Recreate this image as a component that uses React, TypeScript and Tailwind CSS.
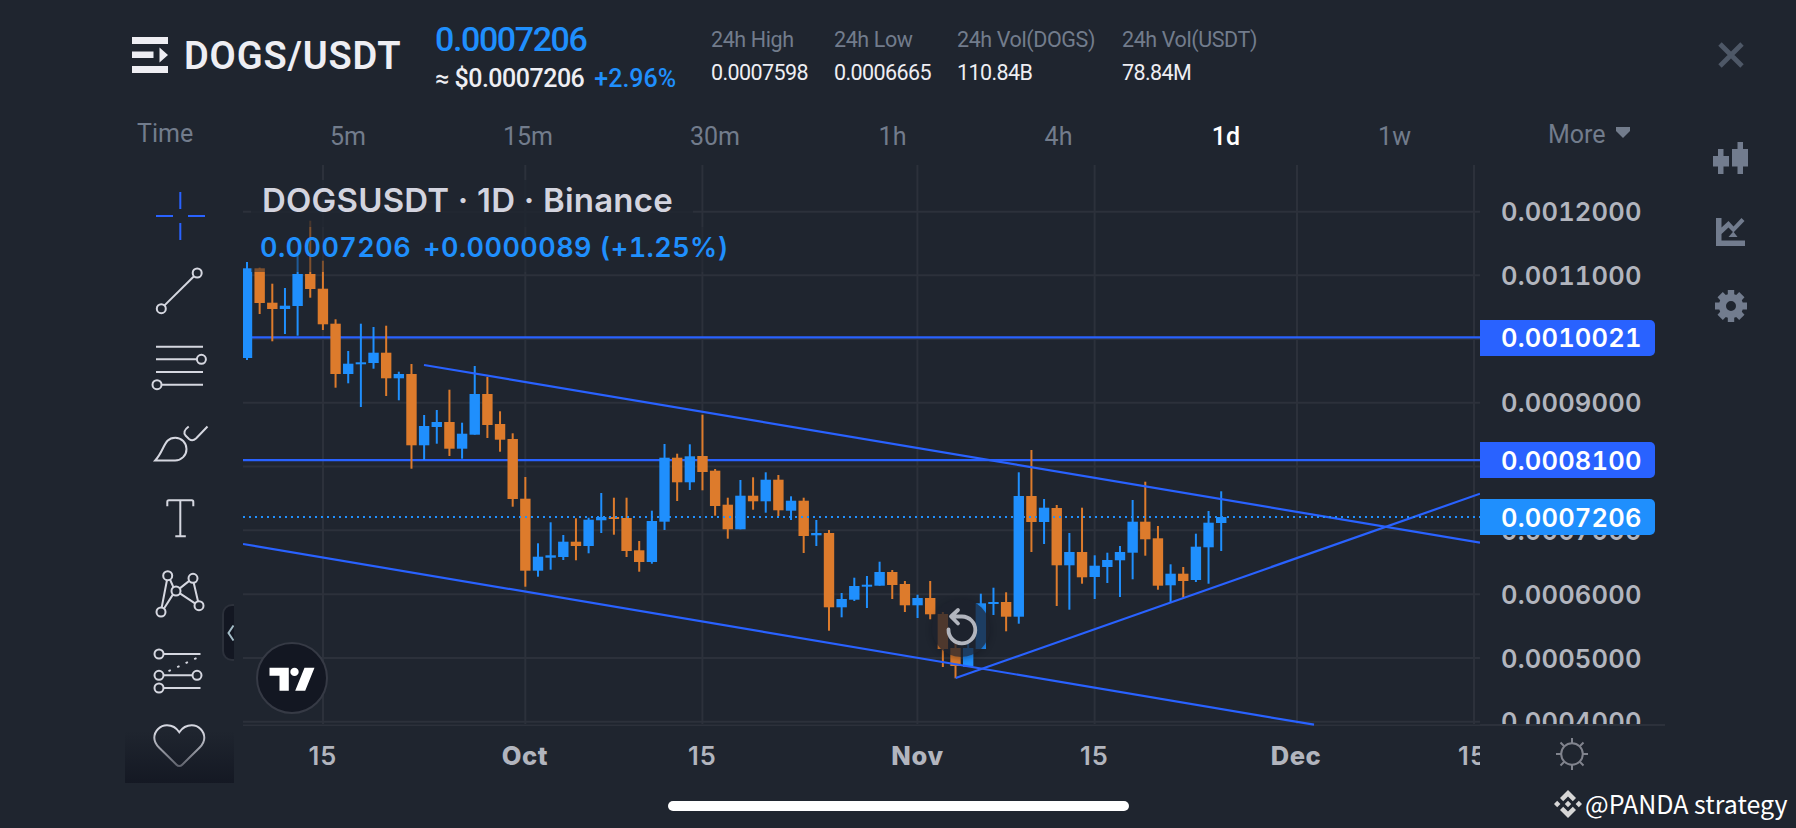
import type { ReactNode } from 'react'

type Side = 'u' | 'd'
// side, high, body top, body bottom, low
type Candle = [Side, number, number, number, number]

const UP = '#1f8ffd'
const DOWN = '#dd7b2c'
const LINE = '#2962ff'
const GRID = '#2c313b'

const candles: Candle[] = [
  ['u', 262, 268.3, 358, 360],
  ['d', 267.7, 268.3, 303, 314],
  ['d', 283.7, 302.7, 309, 341.3],
  ['u', 288, 305.7, 309, 334],
  ['u', 256, 274, 306, 335.7],
  ['d', 220.7, 274, 289, 297.7],
  ['d', 260.7, 288.7, 324.3, 330],
  ['d', 319.3, 323.7, 374, 387.7],
  ['u', 351, 363.7, 374, 383.3],
  ['u', 323.7, 362.3, 364.3, 407],
  ['u', 327, 352.7, 363, 368.7],
  ['d', 325.7, 352.7, 378.3, 396],
  ['u', 371.7, 374, 378.3, 400.3],
  ['d', 364, 374, 445.3, 468.7],
  ['u', 415, 426, 445.3, 460],
  ['u', 410, 422, 427, 443.7],
  ['d', 389.7, 422, 448.7, 456],
  ['u', 422.7, 433.7, 448.7, 458.7],
  ['u', 366, 394, 434.7, 434.7],
  ['d', 377, 394, 425, 438],
  ['d', 411.3, 424, 439.7, 451.7],
  ['d', 433.3, 439, 499, 506.7],
  ['d', 477, 498.7, 570.7, 586.7],
  ['u', 543.3, 556.7, 570.7, 576.7],
  ['u', 522.3, 555.3, 557.7, 569.7],
  ['u', 535, 541.7, 557, 560],
  ['d', 518.3, 541.7, 546, 560.3],
  ['u', 517.7, 519.7, 546, 553.3],
  ['u', 493, 517, 520.3, 533],
  ['d', 497.7, 517, 519, 534.7],
  ['d', 497.7, 518, 551, 557],
  ['d', 541, 550.3, 562, 571.7],
  ['u', 510.7, 521, 562, 563.7],
  ['u', 444, 457.7, 521.7, 530],
  ['d', 453.7, 457.7, 482.3, 501],
  ['u', 444.3, 456.3, 482.3, 490],
  ['d', 414.7, 456, 472, 490.3],
  ['d', 469, 470.7, 506, 515.7],
  ['d', 497.7, 504.7, 529.3, 538.7],
  ['u', 480, 495.7, 529.3, 529.3],
  ['d', 477.3, 495.7, 501.3, 509.7],
  ['u', 472.3, 479.7, 501.3, 512.7],
  ['d', 475, 479.7, 510.3, 516],
  ['u', 496.3, 500.7, 510.7, 520],
  ['d', 497.7, 500.7, 536, 553],
  ['u', 520, 533, 535.3, 546],
  ['d', 530, 533, 607.3, 630.7],
  ['u', 593, 599, 607.3, 617.3],
  ['u', 577.7, 586, 599.7, 601],
  ['u', 576, 584.7, 586.7, 608],
  ['u', 561.7, 572, 585.7, 585.7],
  ['d', 570, 572, 585, 599],
  ['d', 581, 584, 605.3, 612],
  ['u', 594.7, 598, 605.3, 618],
  ['d', 581, 598, 614.3, 619.3],
  ['d', 612, 614, 649, 667],
  ['d', 643.3, 648, 666, 678.3],
  ['u', 643, 648, 666.7, 666.7],
  ['u', 593.7, 603.3, 649, 649],
  ['u', 587.7, 602, 604, 615],
  ['d', 592.3, 602, 616.7, 631.3],
  ['u', 472.3, 496, 616.7, 623.7],
  ['d', 450, 496, 522, 552],
  ['u', 499, 507.7, 522, 544],
  ['d', 505, 508, 565.3, 606],
  ['u', 533, 552, 565.3, 609.7],
  ['d', 507.7, 552, 577.3, 583.7],
  ['u', 555.3, 565.7, 577, 599],
  ['u', 552.7, 560, 567, 583],
  ['u', 546, 552, 560.3, 597],
  ['u', 500, 521.7, 552.7, 579.3],
  ['d', 481.7, 521.7, 539.3, 555.7],
  ['d', 526, 538.3, 585.7, 589.7],
  ['u', 564.3, 573.7, 585.3, 602.7],
  ['d', 567, 573.7, 581, 597.7],
  ['u', 533.7, 546.7, 580, 582],
  ['u', 511, 522.7, 547.3, 583.7],
  ['u', 491.3, 517, 523, 551],
]

const gridX = [323, 525.3, 702.4, 917.4, 1094.6, 1297, 1474]
const gridY = [211.7, 275.3, 339, 402.7, 466.5, 530.3, 594.2, 658, 721.7]

const stats = [
  { label: '24h High', value: '0.0007598', width: 'w-[123px]' },
  { label: '24h Low', value: '0.0006665', width: 'w-[123px]' },
  { label: '24h Vol(DOGS)', value: '110.84B', width: 'w-[165px]' },
  { label: '24h Vol(USDT)', value: '78.84M', width: 'w-[160px]' },
]

const intervals = [
  { label: '5m', width: 'w-[180px]' },
  { label: '15m', width: 'w-[180px]' },
  { label: '30m', width: 'w-[194px]' },
  { label: '1h', width: 'w-[161px]' },
  { label: '4h', width: 'w-[171px]' },
  { label: '1d', width: 'w-[164px]' },
  { label: '1w', width: 'w-[173px]' },
]

const prices = ['0.0012000', '0.0011000', '', '0.0009000', '', '0.0007000', '0.0006000', '0.0005000', '0.0004000']

const dates = [
  { label: '15', style: 'w-[160px] font-[560] tracking-[1.2px]' },
  { label: 'Oct', style: 'w-[244px] font-extrabold' },
  { label: '15', style: 'w-[111px] font-[560] tracking-[1.2px]' },
  { label: 'Nov', style: 'w-[319px] font-extrabold' },
  { label: '15', style: 'w-[35px] font-[560] tracking-[1.2px]' },
  { label: 'Dec', style: 'w-[368px] font-extrabold' },
]

function Tool({ children, color = '#d5d7e0' }: { children: ReactNode; color?: string }) {
  return (
    <svg
      className="block h-[75px] w-[109px]"
      viewBox="0 0 109 75"
      fill="none"
      stroke={color}
      strokeWidth="2"
    >
      {children}
    </svg>
  )
}

function Toolbar() {
  return (
    <aside className="relative h-[618px] w-[109px] shrink-0 overflow-hidden pt-[13px]">
      <Tool color={LINE}>
        <path d="M31 38h17M63 38h17M55.3 14v17M55.3 45v17" />
      </Tool>
      <Tool>
        <circle cx="72.2" cy="20" r="4.5" />
        <circle cx="36.3" cy="55.7" r="4.5" />
        <path d="M39.5 52.4 69 23.2" />
      </Tool>
      <Tool>
        <path d="M31 18.7h47M31 31.3h40.7M31 44h47M36.7 56.7H78" />
        <circle cx="76.4" cy="31.3" r="4.5" />
        <circle cx="32" cy="56.7" r="4.5" />
      </Tool>
      <Tool>
        <path d="M30.2 57.5C40 47 38.5 34.7 50.3 34.7A11.4 11.4 0 0 1 61.5 46A11.4 11.4 0 0 1 50 57.5Z" />
        <path d="M63.7 23.5C59 27 58.5 30 60.5 32.5L64 36Q67.5 38.8 71 35.5L82.5 23.5" />
      </Tool>
      <Tool>
        <path d="M42.3 28.3v-4.5q0-1.5 1.5-1.5h23q1.5 0 1.5 1.5v4.5M55.3 22.3v36M50.3 58.3h10.5" />
      </Tool>
      <Tool>
        <path d="M42 27 36.7 54.5M45 26.5 48.5 34.3M64.2 27.9 54.8 35.4M48 41.4 39 55.5M54.9 40.3 70 50.3M68.7 29.7 73 48.3" />
        <circle cx="42.7" cy="22.7" r="4.5" />
        <circle cx="68" cy="25.3" r="4.5" />
        <circle cx="51" cy="38" r="4.5" />
        <circle cx="36" cy="59" r="4.5" />
        <circle cx="74" cy="52.7" r="4.5" />
      </Tool>
      <Tool>
        <circle cx="34" cy="26" r="4.5" />
        <circle cx="34" cy="47.3" r="4.5" />
        <circle cx="72" cy="47.3" r="4.5" />
        <circle cx="34" cy="60" r="4.5" />
        <path d="M38.5 26h37M38.5 47.3h29M38.5 60h37" />
        <path d="m43.5 43.2 2.3-1M52.2 39.2l2.3-1M60.6 35.2l2.3-1M69.2 31.2l2.3-1" />
      </Tool>
      <Tool>
        <path d="M54.3 63Q52.8 63 51.5 61.7L34 44.5C30.5 41 29.3 38 29.3 34.8A12.7 12.7 0 0 1 42 22.3C47.5 22.3 51.5 25 54.3 29.3C57.2 25 61.2 22.3 66.7 22.3A12.7 12.7 0 0 1 79.3 34.8C79.3 38 78.2 41 74.7 44.5L57.2 61.7Q55.9 63 54.3 63Z" />
      </Tool>
      <div className="absolute bottom-0 left-0 h-[52px] w-full bg-linear-to-b from-[#131722]/0 to-[#131722]/90" />
      <div className="absolute top-[439px] right-[-2px] flex h-[57px] w-[14px] items-center justify-end rounded-l-[10px] border-2 border-[#2c313b] bg-[#131722]">
        <svg className="h-[18px] w-[7px]" viewBox="0 0 7 18" fill="none" stroke="#a3bcc6" strokeWidth="2">
          <path d="M6.5 1.5 1.5 9l5 7.5" />
        </svg>
      </div>
    </aside>
  )
}

function Chart() {
  return (
    <div className="relative h-[561px] w-[1237px]">
      <svg className="block h-[561px] w-[1237px]" viewBox="243 165 1237 561">
        {gridX.map((x) => (
          <line key={x} x1={x} x2={x} y1="165" y2="724" stroke={GRID} strokeWidth="2" />
        ))}
        {gridY.map((y) => (
          <line key={y} x1="243" x2="1480" y1={y} y2={y} stroke={GRID} strokeWidth="2" />
        ))}
        <line x1="243" x2="1480" y1="725.5" y2="725.5" stroke={GRID} strokeWidth="2" />
        <g stroke={LINE} strokeWidth="2.2">
          <line x1="243" x2="1480" y1="337.4" y2="337.4" />
          <line x1="243" x2="1480" y1="460.2" y2="460.2" />
        </g>
        {candles.map(([side, high, top, bottom, low], i) => {
          const x = 247 + i * 12.652
          const color = side === 'u' ? UP : DOWN
          return (
            <g key={i} fill={color}>
              <rect x={x - 1} y={high} width="2" height={low - high} />
              <rect x={x - 5.2} y={top} width="10.4" height={bottom - top} />
            </g>
          )
        })}
        <g stroke={LINE} strokeWidth="2.2">
          <line x1="424" y1="365" x2="1480" y2="542.7" />
          <line x1="243" y1="544" x2="1314" y2="724.7" />
          <line x1="955.7" y1="678" x2="1480" y2="493.7" />
        </g>
        <line x1="243" x2="1480" y1="517" y2="517" stroke={UP} strokeWidth="2" strokeDasharray="2 4" />
      </svg>

      <div className="absolute top-[15px] left-[8px] font-['Inter',sans-serif] font-[560] whitespace-nowrap">
        <div className="h-[47px] w-[442px] bg-[#1f252f]/80 pl-[11px] text-[33px] leading-[41px] tracking-[0.2px] text-[#d3d4df]">
          DOGSUSDT · 1D · Binance
        </div>
        <div className="flex h-[45px] w-[500px] gap-[12px] bg-[#1f252f]/50 pl-[9px] text-[27px] leading-[42px] tracking-[0.45px] text-[#1f8ffd] tabular-nums">
          <span>0.0007206</span>
          <span>+0.0000089 (+1.25%)</span>
        </div>
      </div>

      <div className="absolute top-[477px] left-[13px] size-[72px] rounded-full border-2 border-[#363a45] bg-[#131722]">
        <svg className="block size-[68px]" viewBox="1.5 1 68 68" fill="#fff">
          <path d="M13 24.7h19.3v23H23v-15H13zM48 24.7h10L48.7 47.7h-10z" />
          <circle cx="38" cy="28.9" r="4.2" />
        </svg>
      </div>

      <div className="absolute top-[434px] left-[689px] size-[58px] rounded-full bg-[#1e222d]/75 shadow-[0_2px_6px_rgba(12,15,22,0.35)]">
        <svg
          className="block size-[58px]"
          viewBox="0 0 58 58"
          fill="none"
          stroke="#b2b5be"
          strokeWidth="3.8"
          strokeLinecap="round"
          strokeLinejoin="round"
        >
          <path d="M16.5 30.5A13.4 13.4 0 1 0 30 17.5H19.5M26 11 19 17.5 26 24.5" />
        </svg>
      </div>
    </div>
  )
}

function PriceAxis() {
  return (
    <div className="relative h-[561px] w-[185px] font-['Inter',sans-serif] text-[25.5px] font-[560] tracking-[0.2px] text-[#b2b5be] tabular-nums">
      <div className="flex h-[561px] flex-col overflow-hidden border-b-2 border-[#2c313b] pt-[14px] pl-[21px]">
        {prices.map((price, i) => (
          <div key={i} className="h-[63.8px] shrink-0 leading-[65px]">
            {price}
          </div>
        ))}
      </div>
      <div className="absolute top-[155px] left-0 h-[36px] w-[175px] rounded-r-[5px] bg-[#2962ff] pl-[21px] leading-[36px] text-white">
        0.0010021
      </div>
      <div className="absolute top-[277px] left-0 h-[36px] w-[175px] rounded-r-[5px] bg-[#2962ff] pl-[21px] leading-[37px] text-white">
        0.0008100
      </div>
      <div className="absolute top-[334px] left-0 h-[36px] w-[175px] rounded-r-[5px] bg-[#1f8ffd] pl-[21px] leading-[37px] text-white">
        0.0007206
      </div>
    </div>
  )
}

function Header() {
  return (
    <header className="flex h-[109px] items-start pl-[7px] text-[#eeeef3]">
      <svg className="mt-[37px] h-[36px] w-[36px] shrink-0" viewBox="0 0 36 36" fill="currentColor">
        <path d="M0 0h36v7H0zM0 14.5h21.5v6.5H0zM0 29h36v7H0zM27.5 10.5 36 18l-8.5 7.5z" />
      </svg>
      <h1 className="ml-[16px] w-[251px] shrink-0 pt-[32px] text-[38px] leading-[48px] font-semibold tracking-[0.85px]">
        DOGS/USDT
      </h1>
      <div className="w-[276px] shrink-0 pt-[19px] whitespace-nowrap">
        <div className="h-[40px] text-[34px] leading-[40px] font-medium tracking-[-1.4px] text-[#1f8ffd]">0.0007206</div>
        <div className="flex h-[40px] gap-[10px] text-[25px] leading-[40px] font-medium">
          <span className="tracking-[-0.5px]">≈ $0.0007206</span>
          <span className="text-[#1f8ffd]">+2.96%</span>
        </div>
      </div>
      {stats.map((s) => (
        <div key={s.label} className={`${s.width} shrink-0 pt-[23px] text-[21.5px] leading-[33px] whitespace-nowrap`}>
          <div className="tracking-[-0.4px] text-[#727c8c]">{s.label}</div>
          <div className="tracking-[-0.6px]">{s.value}</div>
        </div>
      ))}
    </header>
  )
}

export default function App() {
  return (
    <div className="flex h-[828px] w-[1796px] overflow-hidden bg-[#1f252f] pl-[125px] font-['Roboto',sans-serif]">
      <main className="flex w-[1540px] shrink-0 flex-col">
        <Header />

        <nav className="flex h-[56px] text-[25px] leading-[56px] text-[#727c8c]">
          <div className="w-[133px] pl-[12px] leading-[49px]">Time</div>
          {intervals.map((t) => (
            <div
              key={t.label}
              className={`${t.width} text-center ${t.label === '1d' ? 'font-medium text-white' : ''}`}
            >
              {t.label}
            </div>
          ))}
          <div className="flex pl-[67px] leading-[51px]">
            More
            <svg className="mt-[18px] ml-[10px] h-[11px] w-[14px]" viewBox="0 0 14 11" fill="currentColor">
              <path d="M0 0h14v4L7 11 0 4z" />
            </svg>
          </div>
        </nav>

        <div className="flex h-[618px]">
          <Toolbar />
          <div className="ml-[9px] w-[1422px]">
            <div className="flex h-[561px]">
              <Chart />
              <PriceAxis />
            </div>
            <div className="flex h-[57px]">
              <div className="flex w-[1237px] overflow-hidden font-['Inter',sans-serif] text-[25.5px] leading-[60px] tracking-[0.6px] text-[#b2b5be]">
                {dates.map((d, i) => (
                  <div key={i} className={`${d.style} shrink-0 text-center`}>
                    {d.label}
                  </div>
                ))}
                <div className="-ml-[22px] shrink-0 font-[560] tracking-[1.2px]">15</div>
              </div>
              <svg
                className="mt-[11px] ml-[75px] size-[34px]"
                viewBox="0 0 34 34"
                fill="none"
                stroke="#80838d"
                strokeWidth="2"
              >
                <circle cx="17" cy="17" r="10.8" />
                <path d="M17 1v5M17 28v5M1 17h5M28 17h5M5.5 5.5l3.7 3.7M24.8 24.8l3.7 3.7M28.5 5.5l-3.7 3.7M9.2 24.8l-3.7 3.7" />
              </svg>
            </div>
          </div>
        </div>

        <div className="mt-[18px] ml-[543px] h-[10px] w-[461px] rounded-full bg-white" />
      </main>

      <div className="flex w-[131px] flex-col items-center text-[#727c8e]">
        <svg className="mt-[42px] size-[26px] text-[#4e5867]" viewBox="0 0 26 26" fill="none" stroke="currentColor" strokeWidth="4.8">
          <path d="M2 2l22 22M24 2L2 24" />
        </svg>
        <svg className="mt-[74px] h-[32px] w-[35px]" viewBox="0 0 35 32" fill="currentColor">
          <path d="M5 7h5.5v7H16v10.5h-5.5V32H5v-7.5H0V14h5zM24.5 0H30v7h5v17.5h-5V32h-5.5v-7.5H19V7h5.5z" />
        </svg>
        <svg className="mt-[44px] h-[28px] w-[29px]" viewBox="0 0 29 28" fill="currentColor">
          <path d="M0 0h5.500v9.500L12.500 3l5 5.500L25.500 0 28.500 3 17.500 14.500l-5-5-7 6.500v6.500H29V28H0z" />
          <path d="M17.300 13.500 21.500 19H12.500z" />
        </svg>
        <svg className="mt-[44px] size-[32px]" viewBox="0 0 32 32" fill="currentColor" fillRule="evenodd">
          <path d="M12.8 0h6.4v4.2l2 .8 3-3L29.5 7.3l-2.7 3 .9 2.300H32v6.800h-4.300l-.9 2.300 2.700 3-5.300 5.300-3-3-2 .8V32h-6.400v-4.200l-2-.8-3 3L2.500 24.700l2.700-3-.9-2.300H0v-6.800h4.300l.9-2.300-2.700-3L7.800 2l3 3 2-.8zM16 11a5 5 0 1 0 0 10a5 5 0 0 0 0-10z" />
        </svg>
      </div>

      <div className="absolute top-[788px] left-[1554px] flex h-[32px] items-center gap-[3px] font-['Noto_Sans_CJK_SC','Noto_Sans',sans-serif] text-[25px] leading-[32px] whitespace-nowrap text-white">
        <svg className="size-[28px]" viewBox="0 0 28 28" fill="#d6d6d6">
          <path d="M14 0l8 8-3.2 3.2L14 6.4l-4.8 4.8L6 8zM14 28l-8-8 3.2-3.2L14 21.6l4.8-4.8L22 20zM14 10.8l3.2 3.2-3.2 3.2-3.2-3.2zM3.2 10.8 6.4 14l-3.2 3.2L0 14zM24.8 10.8 28 14l-3.2 3.2-3.2-3.2z" />
        </svg>
        <span className="-mt-[3px]">@PANDA strategy</span>
      </div>
    </div>
  )
}
